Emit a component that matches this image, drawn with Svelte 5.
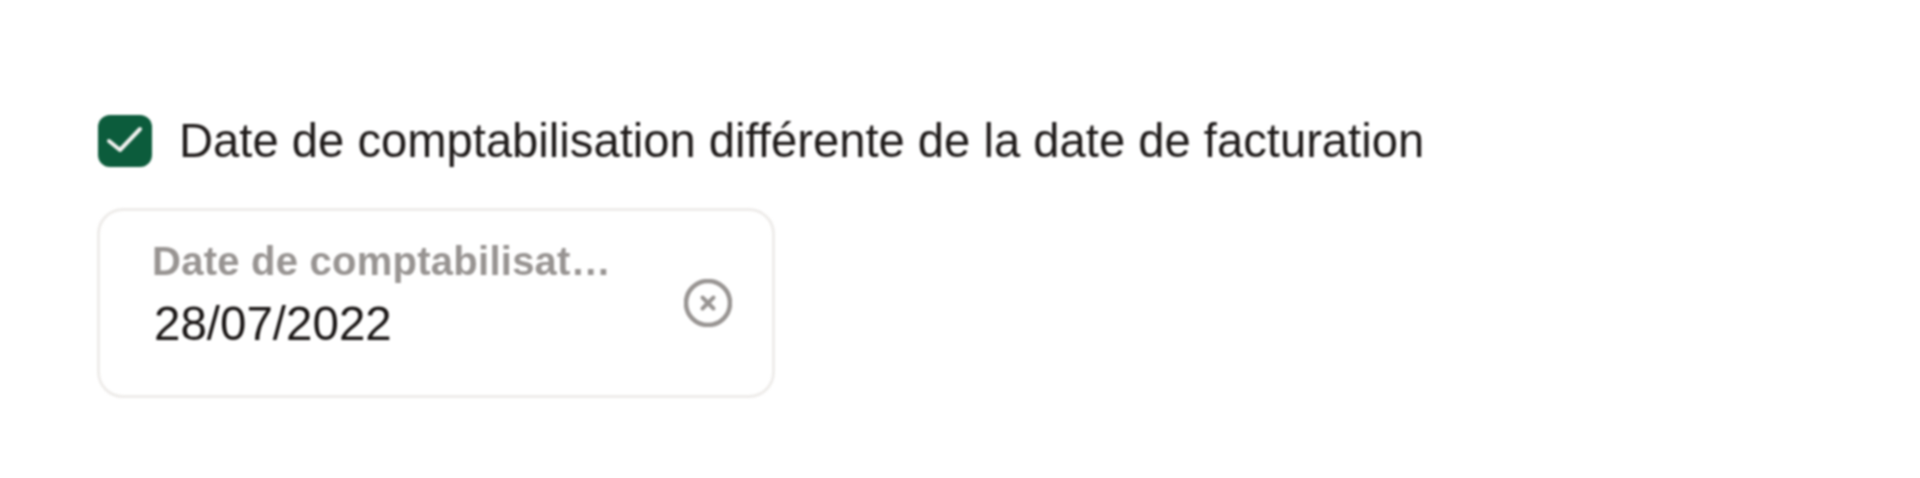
<script>
    let checked = true;
    let label = 'Date de comptabilisat…';
    let value = '28/07/2022';
</script>

<div class="page">
    <label class="check-row">
        <span class="box" class:on={checked}>
            <svg viewBox="0 0 54 52" width="54" height="52" fill="none">
                <path d="M11 26 L22 35 L42 14" stroke="#f2f2f0" stroke-width="4" stroke-linecap="round" stroke-linejoin="round" />
            </svg>
        </span>
        <span class="check-text">Date de comptabilisation différente de la date de facturation</span>
    </label>

    <div class="field">
        <div class="field-body">
            <div class="field-label">{label}</div>
            <div class="field-value">{value}</div>
        </div>
        <svg class="clear" viewBox="0 0 48 48" width="48" height="48" fill="none">
            <circle cx="24" cy="24" r="22" stroke="#989492" stroke-width="4.5" />
            <path d="M18.5 18.5 L29.5 29.5 M29.5 18.5 L18.5 29.5" stroke="#989492" stroke-width="4" stroke-linecap="round" />
        </svg>
    </div>
</div>

<style>
    :global(body) {
        margin: 0;
        background: #fff;
    }

    .page {
        height: 478px;
        box-sizing: border-box;
        padding: 115px 0 0 97px;
        font-family: "Liberation Sans", Arial, sans-serif;
        filter: blur(0.8px);
    }

    .check-row {
        display: flex;
        align-items: center;
        gap: 27px;
        height: 52px;
    }

    .box {
        width: 54px;
        height: 52px;
        margin-left: 1px;
        border-radius: 12px;
        flex: none;
        display: flex;
    }

    .box.on {
        background: #0c5c3c;
    }

    .check-text {
        font-size: 47.2px;
        margin-top: -2px;
        color: #1f1b1a;
        white-space: nowrap;
    }

    .field {
        width: 678px;
        height: 190px;
        margin-top: 41px;
        box-sizing: border-box;
        border: 3px solid #eeecea;
        border-radius: 26px;
        padding: 0 40px 0 52px;
        display: flex;
        align-items: center;
        gap: 20px;
    }

    .field-body {
        flex: 1;
        min-width: 0;
        display: flex;
        flex-direction: column;
        margin-top: -15px;
    }

    .field-label {
        font-size: 40px;
        font-weight: 700;
        line-height: 46px;
        letter-spacing: 0.25px;
        color: #989492;
        white-space: nowrap;
    }

    .field-value {
        font-size: 47.5px;
        line-height: 58px;
        margin: 11px 0 0 2px;
        color: #191514;
    }

    .clear {
        flex: none;
    }
</style>
